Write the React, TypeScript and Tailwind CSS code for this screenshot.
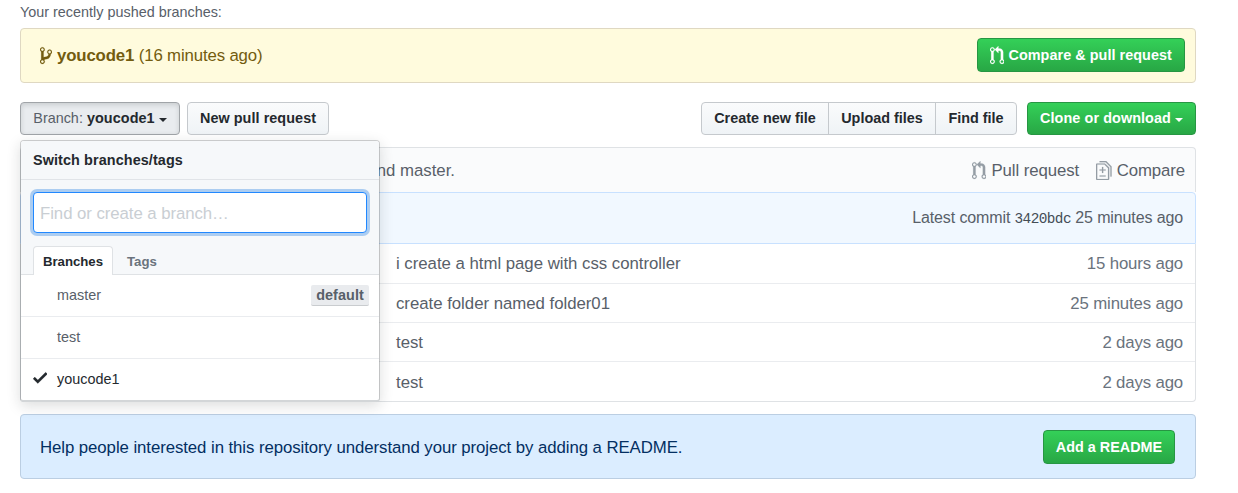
import type { ReactNode } from "react";

const BRANCH =
  "M10 5c0-1.11-.89-2-2-2a1.993 1.993 0 0 0-1 3.72v.3c-.02.52-.23.98-.63 1.38-.4.4-.86.61-1.38.63-.83.02-1.48.16-2 .45V4.72a1.993 1.993 0 0 0-1-3.72C.88 1 0 1.89 0 3a2 2 0 0 0 1 1.72v6.56c-.59.35-1 .99-1 1.72 0 1.11.89 2 2 2 1.11 0 2-.89 2-2 0-.53-.2-1-.53-1.36.09-.06.48-.41.59-.47.25-.11.56-.17.94-.17 1.05-.05 1.95-.45 2.75-1.25S8.95 7.77 9 6.73h-.02C9.59 6.37 10 5.73 10 5zM2 1.8c.66 0 1.2.55 1.2 1.2 0 .65-.55 1.2-1.2 1.2C1.35 4.2.8 3.65.8 3c0-.65.55-1.2 1.2-1.2zm0 12.41c-.66 0-1.2-.55-1.2-1.2 0-.65.55-1.2 1.2-1.2.65 0 1.2.55 1.2 1.2 0 .65-.55 1.2-1.2 1.2zm6-8c-.66 0-1.2-.55-1.2-1.2 0-.65.55-1.2 1.2-1.2.65 0 1.2.55 1.2 1.2 0 .65-.55 1.2-1.2 1.2z";
const PULL =
  "M11 11.28V5c-.03-.78-.34-1.47-.94-2.06C9.46 2.35 8.78 2.03 8 2H7V0L4 3l3 3V4h1c.27.02.48.11.69.31.21.2.3.42.31.69v6.28A1.993 1.993 0 0 0 10 15a1.993 1.993 0 0 0 1-3.72zm-1 2.92c-.66 0-1.2-.55-1.2-1.2 0-.65.55-1.2 1.2-1.2.65 0 1.2.55 1.2 1.2 0 .65-.55 1.2-1.2 1.2zM4 3c0-1.11-.89-2-2-2a1.993 1.993 0 0 0-1 3.72v6.56A1.993 1.993 0 0 0 2 15a1.993 1.993 0 0 0 1-3.72V4.72c.59-.34 1-.98 1-1.72zm-.8 10c0 .66-.55 1.2-1.2 1.2-.65 0-1.2-.55-1.2-1.2 0-.65.55-1.2 1.2-1.2.65 0 1.2.55 1.2 1.2zM2 4.2C1.34 4.2.8 3.65.8 3c0-.65.55-1.2 1.2-1.2.65 0 1.2.55 1.2 1.2 0 .65-.55 1.2-1.2 1.2z";
const DIFF =
  "M6 7h2v1H6v2H5V8H3V7h2V5h1v2zm-3 6h5v-1H3v1zM7.5 2L11 5.5V15c0 .55-.45 1-1 1H1c-.55 0-1-.45-1-1V3c0-.55.45-1 1-1h6.5zM10 6L7 3H1v12h9V6zM8.5 0H3v1h5l4 4v8h1V4.5L8.5 0z";
const CHECK = "M12 5l-8 8-4-4 1.5-1.5L4 10l6.5-6.5L12 5z";

function Icon({ d, w, className = "" }: { d: string; w: number; className?: string }) {
  return (
    <svg
      viewBox={`0 0 ${w} 16`}
      width={w * 1.2}
      height={19.2}
      fillRule="evenodd"
      stroke="currentColor"
      strokeWidth={0.15}
      className={`shrink-0 fill-current ${className}`}
    >
      <path d={d} />
    </svg>
  );
}

function Caret() {
  return <span className="mt-[5px] ml-1 inline-block border-x-4 border-t-4 border-x-transparent border-t-current" />;
}

function Button({ children, className = "" }: { children: ReactNode; className?: string }) {
  return (
    <button
      className={`flex items-center justify-center whitespace-nowrap border text-[14.4px] leading-6 font-bold ${className}`}
    >
      {children}
    </button>
  );
}

const LIGHT = "h-[33px] pb-[2px] border-[#c5c9cd] bg-linear-to-b from-[#fafbfc] to-[#eff3f6] text-[#24292e]";
const GREEN =
  "rounded-[4px] border-[#279643] bg-linear-to-b from-[#34d058] to-[#28a745] text-white";

const commits = [
  { message: "i create a html page with css controller", age: "15 hours ago", size: "h-[40px]" },
  { message: "create folder named folder01", age: "25 minutes ago", size: "h-[39px] pt-[2px]" },
  { message: "test", age: "2 days ago", size: "h-[39px] pt-[2px]" },
  { message: "test", age: "2 days ago", size: "h-[39px] pt-[2px]" },
];

function BranchMenu() {
  return (
    <div className="absolute top-[38px] left-0 z-10 flex h-[262px] w-[360px] flex-col overflow-hidden rounded-[4px] border border-b-2 border-[#1b1f23]/20 border-b-[#d3d6d8] bg-white bg-clip-padding text-[14.4px] shadow-[0_4px_14px_rgba(27,31,35,0.15)]">
      <div className="flex h-[39px] shrink-0 items-center border-b border-[#e1e4e8] bg-[#f6f8fa] px-3 pt-[2px] font-bold tracking-[0.1px] text-[#24292e]">
        Switch branches/tags
      </div>
      <div className="flex h-[95px] shrink-0 flex-col border-b border-[#dfe2e5] bg-[#f6f8fa] px-3 pt-3">
        <input
          className="h-[41px] w-[334px] shrink-0 rounded-[4px] border border-[#2188ff] bg-white px-[6px] pt-[2px] text-[16.8px] tracking-[-0.06px] ring-[3px] ring-[#accdf1] outline-none placeholder:text-[#c9ced3]"
          placeholder="Find or create a branch…"
        />
        <div className="mt-[13px] flex h-[29px] shrink-0 text-[13.2px] font-bold">
          <span className="flex w-20 shrink-0 items-center justify-center rounded-t-[4px] border border-b-0 border-[#dfe2e5] bg-white pt-px text-[#24292e]">
            Branches
          </span>
          <span className="flex items-center px-[14px] pt-[2px] text-[#6a737d]">Tags</span>
        </div>
      </div>
      <div className="flex h-[42px] shrink-0 items-center justify-between border-b border-[#eaecef] pr-[10px] pl-9 text-[#586069]">
        <span>master</span>
        <span className="flex h-[21px] w-[58px] items-center justify-center rounded-[2px] border-b border-[#c9cccf] bg-[#e9ebee] pt-px font-bold tracking-[0.08px]">
          default
        </span>
      </div>
      <div className="flex h-[42px] shrink-0 items-center border-b border-[#eaecef] pl-9 text-[#586069]">test</div>
      <div className="flex h-[42px] shrink-0 items-center pl-3 text-[#24292e]">
        <Icon d={CHECK} w={12} className="-mt-[4px] mr-[9.6px]" />
        youcode1
      </div>
    </div>
  );
}

export default function App() {
  return (
    <div className="h-[493px] w-[1238px] overflow-hidden bg-white pl-5 font-['Liberation_Sans',Arial,sans-serif] text-[16.8px] text-[#586069]">
      <div className="w-[1176px]">
        <h3 className="h-7 pt-[3px] text-[14.4px] leading-[18px]">Your recently pushed branches:</h3>

        <div className="flex h-[55px] items-center justify-between rounded-[4px] border border-[#dfd8c2] bg-[#fffbdd] pr-[10px] pl-[19px] text-[#735c0f]">
          <div className="flex items-center tracking-[-0.14px]">
            <Icon d={BRANCH} w={10} className="mr-[5px]" />
            <span>
              <b>youcode1</b> (16 minutes ago)
            </span>
          </div>
          <Button className={`mb-px h-[34px] w-[208px] pb-px tracking-[0.05px] ${GREEN}`}>
            <Icon d={PULL} w={12} className="mt-[2px] mr-1" />
            Compare &amp; pull request
          </Button>
        </div>

        <div className="relative mt-[19px] flex h-[33px] justify-between">
          <div className="flex gap-[7px]">
            <Button className="h-[33px] w-40 rounded-[4px] border-[#a0a4a8] bg-[#e9ecef] pb-[2px] text-[#24292e] shadow-[inset_0_2px_5px_rgba(27,31,35,0.15)]">
              <span className="mr-1 font-normal text-[#586069]">Branch:</span>
              <span className="tracking-[0.08px]">youcode1</span>
              <Caret />
            </Button>
            <Button className={`w-[142px] rounded-[4px] tracking-[0.06px] ${LIGHT}`}>New pull request</Button>
          </div>
          <div className="flex">
            <Button className={`w-[128px] rounded-l-[4px] ${LIGHT}`}>Create new file</Button>
            <Button className={`-ml-px w-[108px] ${LIGHT}`}>Upload files</Button>
            <Button className={`-ml-px w-[82px] rounded-r-[4px] ${LIGHT}`}>Find file</Button>
            <Button className={`ml-[10px] h-[33px] w-[169px] pb-[2px] tracking-[0.08px] ${GREEN}`}>
              Clone or download
              <Caret />
            </Button>
          </div>
          <BranchMenu />
        </div>

        <div className="mt-3 flex h-[45px] items-center justify-between rounded-t-[4px] border border-b-0 border-[#dfe2e5] bg-[#fafbfc] pt-px pr-[10px]">
          <span className="w-[434px] text-right">and master.</span>
          <div className="flex items-center">
            <Icon d={PULL} w={12} className="mr-[5px] text-[#959da5]" />
            <span className="tracking-[-0.08px]">Pull request</span>
            <Icon d={DIFF} w={13} className="mr-[5px] ml-[17px] text-[#959da5]" />
            <span className="tracking-[-0.1px]">Compare</span>
          </div>
        </div>
        <div className="flex h-[52px] items-center justify-end rounded-t-[4px] border border-[#c8e1ff] bg-[#f1f8ff] pr-3 text-[16px]">
          <span className="tracking-[-0.12px]">
            Latest commit{" "}
            <span className="font-['Liberation_Mono',monospace] text-[14.4px] tracking-[-0.58px] text-[#444d56]">
              3420bdc
            </span>{" "}
            25 minutes ago
          </span>
        </div>
        <div className="rounded-b-[4px] border border-t-0 border-[#dfe2e5]">
          {commits.map((commit, i) => (
            <div
              key={i}
              className={`flex items-center justify-between border-b border-[#eaecef] pr-3 pl-[375px] last:border-b-0 ${commit.size}`}
            >
              <span className="tracking-[-0.02px]">{commit.message}</span>
              <span className="tracking-[-0.15px] text-[#6a737d]">{commit.age}</span>
            </div>
          ))}
        </div>

        <div className="mt-3 flex h-[65px] items-center justify-between rounded-[4px] border border-[#bbcee2] bg-[#dbedff] pr-5 pl-[19px] text-[#032f62]">
          <span className="pt-[2px] tracking-[-0.07px]">
            Help people interested in this repository understand your project by adding a README.
          </span>
          <Button className={`h-[34px] w-[132px] ${GREEN}`}>Add a README</Button>
        </div>
      </div>
    </div>
  );
}
